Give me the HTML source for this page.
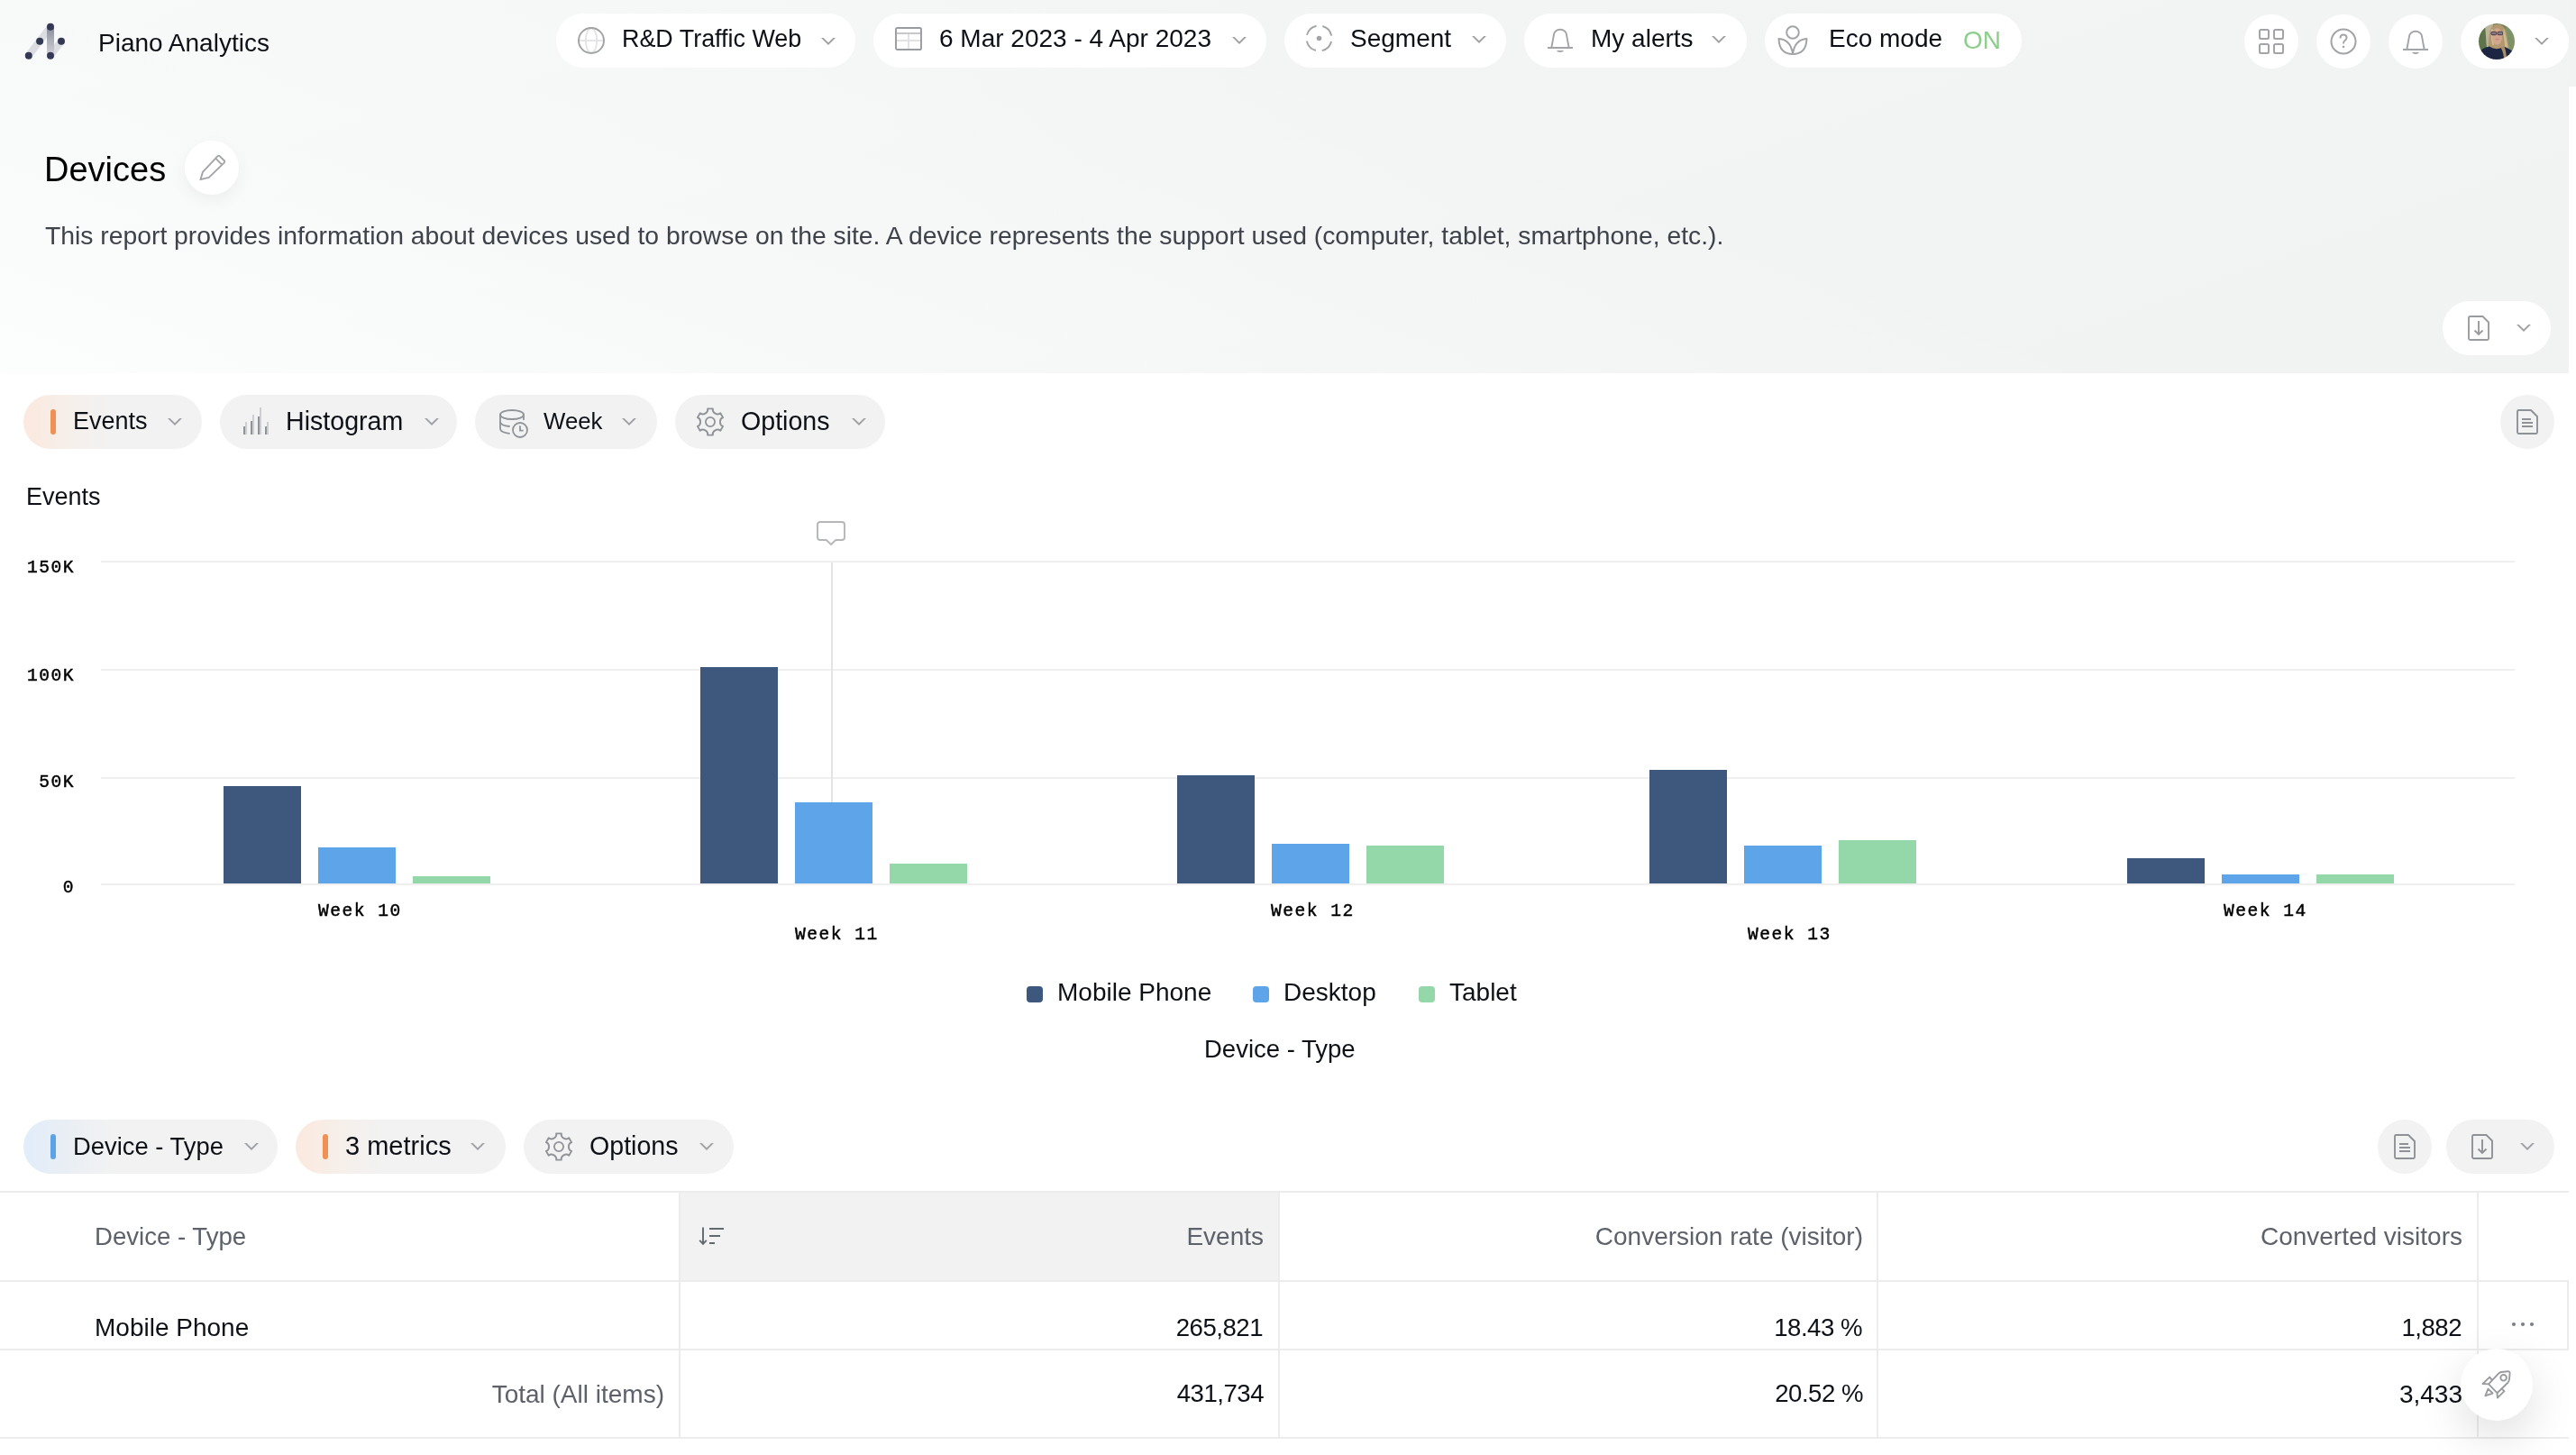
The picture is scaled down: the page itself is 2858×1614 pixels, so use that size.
<!DOCTYPE html>
<html><head><meta charset="utf-8">
<style>
html,body{margin:0;padding:0}
.t,.mono{will-change:transform}
body{width:2858px;height:1614px;overflow:hidden;position:relative;background:#fff;font-family:"Liberation Sans",sans-serif;color:#0d1117}
.a{position:absolute}
.t{position:absolute;white-space:nowrap;line-height:28px;font-size:28px}
.pill{position:absolute;height:60px;border-radius:30px;background:#fff}
.gp{position:absolute;height:60px;border-radius:30px;background:#f2f2f2;top:438px}
.chev{position:absolute;width:16px;height:8px}
.mono{position:absolute;white-space:nowrap;font-family:"Liberation Mono",monospace;font-size:19.6px;line-height:22px;letter-spacing:1.5px;color:#000;-webkit-text-stroke:0.45px #000}
.bar{position:absolute;width:86px}
.c1{background:#3d587c}.c2{background:#5da4e8}.c3{background:#94d7a9}
.hl{position:absolute;height:2px;background:#efefef}
.vl{position:absolute;width:2px;background:#ececec}
.tb{position:absolute;height:2px;background:#ececec}
.r{text-align:right}
</style></head><body>
<!-- header bg -->
<div class="a" style="left:0;top:0;width:2850px;height:414px;background:linear-gradient(160deg,#f6f7f7 0%,#f3f4f4 40%,#f1f2f2 100%)"></div>
<div class="a" style="left:0;top:0;width:2850px;height:414px;background:linear-gradient(20deg,rgba(252,253,253,1) 0%,rgba(250,251,251,0.6) 25%,rgba(241,242,242,0) 60%)"></div>
<div class="a" style="left:2850px;top:0;width:8px;height:96px;background:#f1f2f2"></div>

<!-- logo -->
<svg class="a" style="left:0;top:0" width="90" height="90" viewBox="0 0 90 90">
 <defs><linearGradient id="lg1" x1="0" y1="0" x2="0" y2="1"><stop offset="0" stop-color="#8a8d9c"/><stop offset="1" stop-color="#d4d5da"/></linearGradient></defs>
 <line x1="31.8" y1="61.7" x2="56" y2="29.8" stroke="#dcdde1" stroke-width="8"/>
 <line x1="56" y1="61.7" x2="68" y2="45.7" stroke="#dcdde1" stroke-width="8"/>
 <rect x="52" y="30" width="8" height="32" fill="url(#lg1)"/>
 <g fill="#343a55"><circle cx="31.8" cy="61.7" r="4"/><circle cx="44.1" cy="45.7" r="4"/><circle cx="56" cy="29.8" r="4"/><circle cx="68" cy="45.7" r="4"/><circle cx="56" cy="61.7" r="4"/></g>
</svg>
<div class="t" style="left:109.2px;top:34px;font-size:28px">Piano Analytics</div>

<!-- pill 1 -->
<div class="pill" style="left:617px;top:15px;width:332px"></div>
<svg class="a" style="left:640px;top:29px" width="32" height="32" viewBox="0 0 32 32">
 <line x1="3" y1="16" x2="29" y2="16" stroke="#e3e4e6" stroke-width="1.9"/>
 <ellipse cx="16" cy="16" rx="6.2" ry="13.6" fill="none" stroke="#e3e4e6" stroke-width="1.9"/>
 <circle cx="16" cy="16" r="14" fill="none" stroke="#a0a2a6" stroke-width="1.9"/>
</svg>
<div class="t" style="left:690px;top:29px;font-size:26.9px">R&amp;D Traffic Web</div>
<svg class="chev" style="left:911px;top:42px" viewBox="0 0 16 8"><path d="M0 0 L2.7 0 L8 5.3 L13.3 0 L16 0 L8 8 Z" fill="#9fa1a5"/></svg>

<!-- pill 2 -->
<div class="pill" style="left:969px;top:15px;width:436px"></div>
<svg class="a" style="left:993px;top:30px" width="30" height="26" viewBox="0 0 30 26">
 <line x1="2" y1="7" x2="28" y2="7" stroke="#c5c6c9" stroke-width="1.9"/>
 <rect x="1" y="1" width="28" height="24" rx="1.6" fill="none" stroke="#999b9f" stroke-width="1.9"/>
 <line x1="2" y1="15" x2="28" y2="15" stroke="#e0e1e3" stroke-width="1.9"/>
 <line x1="15" y1="8" x2="15" y2="24" stroke="#e0e1e3" stroke-width="1.9"/>
</svg>
<div class="t" style="left:1042px;top:29px">6 Mar 2023 - 4 Apr 2023</div>
<svg class="chev" style="left:1367px;top:41px" viewBox="0 0 16 8"><path d="M0 0 L2.7 0 L8 5.3 L13.3 0 L16 0 L8 8 Z" fill="#9fa1a5"/></svg>

<!-- pill 3 -->
<div class="pill" style="left:1425px;top:15px;width:246px"></div>
<svg class="a" style="left:1447px;top:26.4px" width="33" height="33" viewBox="0 0 33 33">
 <circle cx="16.5" cy="16.5" r="14" fill="none" stroke="#a2a4a8" stroke-width="2" stroke-dasharray="15 6.99" stroke-dashoffset="-3.5"/>
 <circle cx="16.5" cy="16.5" r="2.8" fill="#a2a4a8"/>
</svg>
<div class="t" style="left:1498px;top:29px">Segment</div>
<svg class="chev" style="left:1633px;top:40px" viewBox="0 0 16 8"><path d="M0 0 L2.7 0 L8 5.3 L13.3 0 L16 0 L8 8 Z" fill="#9fa1a5"/></svg>

<!-- pill 4 -->
<div class="pill" style="left:1691px;top:15px;width:247px"></div>
<svg class="a" style="left:1716px;top:31px" width="30" height="28" viewBox="0 0 30 28">
 <path d="M5.3 22 L8 7.5 A7 5.8 0 0 1 22 7.5 L24.7 22" fill="none" stroke="#a2a4a8" stroke-width="1.9"/>
 <line x1="1" y1="22" x2="29" y2="22" stroke="#a2a4a8" stroke-width="2"/>
 <path d="M11 24.9 L19 24.9 Q18.3 26.9 15 26.9 Q11.7 26.9 11 24.9 Z" fill="#a2a4a8"/>
</svg>
<div class="t" style="left:1765px;top:29px">My alerts</div>
<svg class="chev" style="left:1899px;top:40px" viewBox="0 0 16 8"><path d="M0 0 L2.7 0 L8 5.3 L13.3 0 L16 0 L8 8 Z" fill="#9fa1a5"/></svg>

<!-- pill 5 -->
<div class="pill" style="left:1958px;top:15px;width:285px"></div>
<svg class="a" style="left:1972px;top:28px" width="34" height="34" viewBox="0 0 34 34">
 <circle cx="17" cy="8" r="6.8" fill="none" stroke="#a2a4a8" stroke-width="2"/>
 <path d="M17 32 Q2 32 1.5 15 Q15 16 17 32 Q19 16 32.5 15 Q32 32 17 32 Z" fill="none" stroke="#a2a4a8" stroke-width="2" stroke-linejoin="round"/>
</svg>
<div class="t" style="left:2029px;top:29px">Eco mode</div>
<div class="t" style="left:2177.5px;top:31px;color:#8ccf8c;font-size:28px">ON</div>

<!-- right circles -->
<div class="pill" style="left:2490px;top:16px;width:60px"></div>
<svg class="a" style="left:2505px;top:31px" width="30" height="30" viewBox="0 0 30 30">
 <g fill="none" stroke="#a2a4a8" stroke-width="2"><rect x="2" y="2" width="10" height="10" rx="1.5"/><rect x="18" y="2" width="10" height="10" rx="1.5"/><rect x="2" y="18" width="10" height="10" rx="1.5"/><rect x="18" y="18" width="10" height="10" rx="1.5"/></g>
</svg>
<div class="pill" style="left:2570px;top:16px;width:60px"></div>
<svg class="a" style="left:2585px;top:31px" width="30" height="30" viewBox="0 0 30 30">
 <circle cx="15" cy="15" r="13.5" fill="none" stroke="#a2a4a8" stroke-width="2"/>
 <path d="M11.5 11.5 Q11.5 7.5 15 7.5 Q18.5 7.5 18.5 11 Q18.5 13 16.5 14 Q15 15 15 17.5" fill="none" stroke="#a2a4a8" stroke-width="2"/>
 <circle cx="15" cy="21" r="1.3" fill="#a2a4a8"/>
</svg>
<div class="pill" style="left:2650px;top:16px;width:60px"></div>
<svg class="a" style="left:2665px;top:33px" width="30" height="28" viewBox="0 0 30 28">
 <path d="M5.3 22 L8 7.5 A7 5.8 0 0 1 22 7.5 L24.7 22" fill="none" stroke="#a2a4a8" stroke-width="1.9"/>
 <line x1="1" y1="22" x2="29" y2="22" stroke="#a2a4a8" stroke-width="2"/>
 <path d="M11 24.9 L19 24.9 Q18.3 26.9 15 26.9 Q11.7 26.9 11 24.9 Z" fill="#a2a4a8"/>
</svg>
<div class="pill" style="left:2730px;top:16px;width:120px"></div>
<svg class="a" style="left:2750px;top:26px" width="40" height="40" viewBox="0 0 40 40">
 <defs><clipPath id="av"><circle cx="20" cy="20" r="20"/></clipPath><filter id="bl" x="-10%" y="-10%" width="120%" height="120%"><feGaussianBlur stdDeviation="0.6"/></filter></defs>
 <g clip-path="url(#av)"><g filter="url(#bl)">
  <rect width="40" height="40" fill="#6f8456"/>
  <rect x="0" y="0" width="12" height="40" fill="#5d7448"/>
  <rect x="30" y="0" width="10" height="40" fill="#7d9366"/>
  <path d="M7 0 L16 0 L15 26 L9 30 Z" fill="#bdb59b"/>
  <path d="M11 40 Q10 18 12.5 8 Q15 0.5 21 1 Q28 1 30.5 9 Q33 20 35 38 L30 40 Z" fill="#b29770"/>
  <path d="M28 6 Q31 14 33 32 L30 36 Q29 20 27 10 Z" fill="#cdbb92"/>
  <path d="M14 6 Q13 14 15.5 24 L17 24 Q15.5 14 16 7 Z" fill="#d2bf98"/>
  <ellipse cx="20.5" cy="14.5" rx="5.6" ry="9.6" fill="#d2a68c"/>
  <g fill="#8a7a86" stroke="#3f3748" stroke-width="1"><rect x="14" y="9.3" width="5.6" height="3.4" rx="1"/><rect x="21" y="9.3" width="5.6" height="3.4" rx="1"/></g>
  <ellipse cx="20.5" cy="17.6" rx="2.2" ry="0.9" fill="#c98580"/>
  <path d="M0 40 L0 33 Q3 27 12 25.5 Q16 28 20 28.2 Q26 27.5 29 26 Q37 29 40 34 L40 40 Z" fill="#1e2843"/>
  <path d="M24 26 Q27 30 28 38 L31 38 Q30 28 28 25 Z" fill="#a88f68"/>
 </g></g>
</svg>
<svg class="chev" style="left:2812px;top:42px" viewBox="0 0 16 8"><path d="M0 0 L2.7 0 L8 5.3 L13.3 0 L16 0 L8 8 Z" fill="#9fa1a5"/></svg>

<!-- report title -->
<div class="t" style="left:49px;top:169px;font-size:38px;line-height:38px;color:#000">Devices</div>
<div class="pill" style="left:205px;top:156px;width:60px;box-shadow:0 6px 18px rgba(0,0,0,0.05)"></div>
<svg class="a" style="left:215px;top:165px" width="40" height="40" viewBox="0 0 40 40"><path d="M7.4 34.2 L9.9 25.9 L26.3 8.3 Q27.6 7 28.9 8.3 L33.6 13 Q34.9 14.3 33.6 15.6 L16.8 31.9 Z M24.2 10.6 L31.4 17.8" fill="none" stroke="#a2a4a8" stroke-width="1.9" stroke-linejoin="round"/></svg>
<div class="t" style="left:49.8px;top:247px;font-size:28.3px;color:#3e434b">This report provides information about devices used to browse on the site. A device represents the support used (computer, tablet, smartphone, etc.).</div>

<!-- export pill header -->
<div class="pill" style="left:2710px;top:334px;width:120px"></div>
<svg class="a" style="left:2737px;top:350px" width="26" height="30" viewBox="0 0 26 30"><path d="M2 2.5 Q2 1 3.5 1 L17.5 1 L24 7.5 L24 25.5 Q24 27 22.5 27 L3.5 27 Q2 27 2 25.5 Z" fill="none" stroke="#999b9f" stroke-width="1.9" stroke-linejoin="round"/><path d="M13 6 L13 21 M8.5 16.5 L13 21 L17.5 16.5" fill="none" stroke="#999b9f" stroke-width="1.9"/></svg>
<svg class="chev" style="left:2792px;top:360px" viewBox="0 0 16 8"><path d="M0 0 L2.7 0 L8 5.3 L13.3 0 L16 0 L8 8 Z" fill="#9fa1a5"/></svg>

<!-- toolbar 1 -->
<div class="gp" style="left:26px;width:198px;background:linear-gradient(90deg,#fbe9de 0px,#f7eee8 40px,#f2f2f2 95px)"></div>
<div class="a" style="left:56px;top:454px;width:6px;height:28px;border-radius:3px;background:#ef9155"></div>
<div class="t" style="left:81px;top:453px;font-size:27px">Events</div>
<svg class="chev" style="left:186px;top:464px" viewBox="0 0 16 8"><path d="M0 0 L2.7 0 L8 5.3 L13.3 0 L16 0 L8 8 Z" fill="#9fa1a5"/></svg>
<div class="gp" style="left:244px;width:263px"></div>
<svg class="a" style="left:262px;top:446px" width="44" height="42" viewBox="0 0 44 42"><g fill="#909397"><rect x="8" y="27" width="2" height="9"/><rect x="16" y="21" width="2" height="15"/><rect x="24" y="16" width="2" height="20"/><rect x="32" y="27" width="2" height="9"/></g><g fill="#cdced1"><rect x="10" y="22" width="2" height="14"/><rect x="18" y="14" width="2" height="22"/><rect x="26" y="6" width="2" height="30"/><rect x="34" y="22" width="2" height="14"/></g></svg>
<div class="t" style="left:317px;top:453px;font-size:28.6px">Histogram</div>
<svg class="chev" style="left:471px;top:464px" viewBox="0 0 16 8"><path d="M0 0 L2.7 0 L8 5.3 L13.3 0 L16 0 L8 8 Z" fill="#9fa1a5"/></svg>
<div class="gp" style="left:527px;width:202px"></div>
<svg class="a" style="left:546px;top:446px" width="48" height="46" viewBox="0 0 48 46"><g fill="none" stroke="#909397" stroke-width="1.8" stroke-linecap="round"><ellipse cx="22" cy="14" rx="13" ry="5"/><path d="M9 14 L9 29.5 Q9 33.5 19 34.8"/><path d="M9 22.5 Q10 26 19 27"/><path d="M35 14 L35 19.3"/><circle cx="31" cy="31" r="8"/><path d="M31 26.3 L31 31.6 L34.6 31.6" stroke-linecap="butt"/></g></svg>
<div class="t" style="left:603px;top:453px;font-size:25.8px">Week</div>
<svg class="chev" style="left:690px;top:464px" viewBox="0 0 16 8"><path d="M0 0 L2.7 0 L8 5.3 L13.3 0 L16 0 L8 8 Z" fill="#9fa1a5"/></svg>
<div class="gp" style="left:749px;width:233px"></div>
<svg class="a" style="left:764px;top:444px" width="48" height="48" viewBox="0 0 48 48"><path d="M21.16 9.37 L26.84 9.37 C25.98 13.79 31.85 17.18 35.25 14.22 L38.09 19.15 C33.83 20.61 33.83 27.39 38.09 28.85 L35.25 33.78 C31.85 30.82 25.98 34.21 26.84 38.63 L21.16 38.63 C22.02 34.21 16.15 30.82 12.75 33.78 L9.91 28.85 C14.17 27.39 14.17 20.61 9.91 19.15 L12.75 14.22 C16.15 17.18 22.02 13.79 21.16 9.37 Z" fill="none" stroke="#909397" stroke-width="1.9" stroke-linejoin="round"/><circle cx="24" cy="24" r="5.1" fill="none" stroke="#909397" stroke-width="1.8"/></svg>
<div class="t" style="left:822px;top:453px;font-size:28.6px">Options</div>
<svg class="chev" style="left:945px;top:464px" viewBox="0 0 16 8"><path d="M0 0 L2.7 0 L8 5.3 L13.3 0 L16 0 L8 8 Z" fill="#9fa1a5"/></svg>
<div class="gp" style="left:2774px;width:60px"></div>
<svg class="a" style="left:2791px;top:453px" width="26" height="30" viewBox="0 0 26 30"><path d="M2 3.5 Q2 2 3.5 2 L17 2 L24 9 L24 26.5 Q24 28 22.5 28 L3.5 28 Q2 28 2 26.5 Z" fill="none" stroke="#8e9196" stroke-width="1.9" stroke-linejoin="round"/><path d="M7 12 L17 12 M7 16 L19 16 M7 20 L19 20" stroke="#8e9196" stroke-width="1.9"/></svg>

<!-- chart -->
<div class="t" style="left:29px;top:537px;font-size:27px">Events</div>
<svg class="a" style="left:905px;top:577px" width="34" height="30" viewBox="0 0 34 30"><path d="M5 2 L29 2 Q32 2 32 5 L32 19 Q32 22 29 22 L22.3 22 L17 27 L11.7 22 L5 22 Q2 22 2 19 L2 5 Q2 2 5 2 Z" fill="none" stroke="#b4b6b9" stroke-width="1.9" stroke-linejoin="miter"/></svg>
<div class="hl" style="left:112px;top:622px;width:2678px"></div>
<div class="hl" style="left:112px;top:742px;width:2678px"></div>
<div class="hl" style="left:112px;top:862px;width:2678px"></div>
<div class="hl" style="left:112px;top:980px;width:2678px"></div>
<div class="mono r" style="left:0;width:83px;top:619px">150K</div>
<div class="mono r" style="left:0;width:83px;top:739px">100K</div>
<div class="mono r" style="left:0;width:83px;top:856.5px">50K</div>
<div class="mono r" style="left:0;width:83px;top:974px">0</div>
<div class="a" style="left:922px;top:624px;width:2px;height:267px;background:#e3e4e6"></div>
<div class="bar c1" style="left:248px;top:872px;height:108px"></div>
<div class="bar c2" style="left:353px;top:940px;height:40px"></div>
<div class="bar c3" style="left:458px;top:972px;height:8px"></div>
<div class="bar c1" style="left:777px;top:740px;height:240px"></div>
<div class="bar c2" style="left:882px;top:890px;height:90px"></div>
<div class="bar c3" style="left:987px;top:958px;height:22px"></div>
<div class="bar c1" style="left:1306px;top:860px;height:120px"></div>
<div class="bar c2" style="left:1411px;top:936px;height:44px"></div>
<div class="bar c3" style="left:1516px;top:938px;height:42px"></div>
<div class="bar c1" style="left:1830px;top:854px;height:126px"></div>
<div class="bar c2" style="left:1935px;top:938px;height:42px"></div>
<div class="bar c3" style="left:2040px;top:932px;height:48px"></div>
<div class="bar c1" style="left:2360px;top:952px;height:28px"></div>
<div class="bar c2" style="left:2465px;top:970px;height:10px"></div>
<div class="bar c3" style="left:2570px;top:970px;height:10px"></div>
<div class="mono" style="left:353px;top:1000px">Week 10</div>
<div class="mono" style="left:882px;top:1026px">Week 11</div>
<div class="mono" style="left:1410px;top:1000px">Week 12</div>
<div class="mono" style="left:1939px;top:1026px">Week 13</div>
<div class="mono" style="left:2467px;top:1000px">Week 14</div>

<!-- legend -->
<div class="a c1" style="left:1139px;top:1094px;width:18px;height:18px;border-radius:4px"></div>
<div class="t" style="left:1173px;top:1087px">Mobile Phone</div>
<div class="a c2" style="left:1390px;top:1094px;width:18px;height:18px;border-radius:4px"></div>
<div class="t" style="left:1424px;top:1087px">Desktop</div>
<div class="a c3" style="left:1574px;top:1094px;width:18px;height:18px;border-radius:4px"></div>
<div class="t" style="left:1608px;top:1087px">Tablet</div>
<div class="t" style="left:1336px;top:1150px;font-size:27.5px">Device - Type</div>

<!-- toolbar 2 -->
<div class="gp" style="top:1242px;left:26px;width:282px;background:linear-gradient(90deg,#e1edfa 0px,#e8eef5 40px,#f2f2f2 100px)"></div>
<div class="a" style="left:56px;top:1258px;width:6px;height:28px;border-radius:3px;background:#5ca3e6"></div>
<div class="t" style="left:81px;top:1258px;font-size:27.4px">Device - Type</div>
<svg class="chev" style="left:271px;top:1268px" viewBox="0 0 16 8"><path d="M0 0 L2.7 0 L8 5.3 L13.3 0 L16 0 L8 8 Z" fill="#9fa1a5"/></svg>
<div class="gp" style="top:1242px;left:328px;width:233px;background:linear-gradient(90deg,#fbe9de 0px,#f7eee8 40px,#f2f2f2 95px)"></div>
<div class="a" style="left:358px;top:1258px;width:6px;height:28px;border-radius:3px;background:#ef9155"></div>
<div class="t" style="left:383px;top:1257px;font-size:29px">3 metrics</div>
<svg class="chev" style="left:522px;top:1268px" viewBox="0 0 16 8"><path d="M0 0 L2.7 0 L8 5.3 L13.3 0 L16 0 L8 8 Z" fill="#9fa1a5"/></svg>
<div class="gp" style="top:1242px;left:581px;width:233px"></div>
<svg class="a" style="left:596px;top:1248px" width="48" height="48" viewBox="0 0 48 48"><path d="M21.16 9.37 L26.84 9.37 C25.98 13.79 31.85 17.18 35.25 14.22 L38.09 19.15 C33.83 20.61 33.83 27.39 38.09 28.85 L35.25 33.78 C31.85 30.82 25.98 34.21 26.84 38.63 L21.16 38.63 C22.02 34.21 16.15 30.82 12.75 33.78 L9.91 28.85 C14.17 27.39 14.17 20.61 9.91 19.15 L12.75 14.22 C16.15 17.18 22.02 13.79 21.16 9.37 Z" fill="none" stroke="#909397" stroke-width="1.9" stroke-linejoin="round"/><circle cx="24" cy="24" r="5.1" fill="none" stroke="#909397" stroke-width="1.8"/></svg>
<div class="t" style="left:654px;top:1257px;font-size:28.6px">Options</div>
<svg class="chev" style="left:776px;top:1268px" viewBox="0 0 16 8"><path d="M0 0 L2.7 0 L8 5.3 L13.3 0 L16 0 L8 8 Z" fill="#9fa1a5"/></svg>
<div class="gp" style="top:1242px;left:2638px;width:60px"></div>
<svg class="a" style="left:2655px;top:1257px" width="26" height="30" viewBox="0 0 26 30"><path d="M2 3.5 Q2 2 3.5 2 L17 2 L24 9 L24 26.5 Q24 28 22.5 28 L3.5 28 Q2 28 2 26.5 Z" fill="none" stroke="#8e9196" stroke-width="1.9" stroke-linejoin="round"/><path d="M7 12 L17 12 M7 16 L19 16 M7 20 L19 20" stroke="#8e9196" stroke-width="1.9"/></svg>
<div class="gp" style="top:1242px;left:2714px;width:120px"></div>
<svg class="a" style="left:2741px;top:1257px" width="26" height="30" viewBox="0 0 26 30"><path d="M2 3.5 Q2 2 3.5 2 L17.5 2 L24 8.5 L24 26.5 Q24 28 22.5 28 L3.5 28 Q2 28 2 26.5 Z" fill="none" stroke="#8e9196" stroke-width="1.9" stroke-linejoin="round"/><path d="M13 7 L13 22 M8.5 17.5 L13 22 L17.5 17.5" fill="none" stroke="#8e9196" stroke-width="1.9"/></svg>
<svg class="chev" style="left:2796px;top:1268px" viewBox="0 0 16 8"><path d="M0 0 L2.7 0 L8 5.3 L13.3 0 L16 0 L8 8 Z" fill="#9fa1a5"/></svg>

<!-- table -->
<div class="a" style="left:754px;top:1322px;width:665px;height:99px;background:#f2f2f2"></div>
<div class="tb" style="left:0;top:1321px;width:2850px"></div>
<div class="tb" style="left:0;top:1420px;width:2850px"></div>
<div class="tb" style="left:0;top:1496px;width:2850px"></div>
<div class="tb" style="left:0;top:1594px;width:2850px"></div>
<div class="vl" style="left:753px;top:1322px;height:273px"></div>
<div class="vl" style="left:1418px;top:1322px;height:273px"></div>
<div class="vl" style="left:2082px;top:1322px;height:273px"></div>
<div class="vl" style="left:2748px;top:1322px;height:273px"></div>
<div class="vl" style="left:2848px;top:1421px;height:76px"></div>
<div class="t" style="left:105px;top:1358px;color:#5d6169;font-size:27.6px">Device - Type</div>
<svg class="a" style="left:774px;top:1360px" width="30" height="22" viewBox="0 0 30 22"><g fill="none" stroke="#63676e" stroke-width="1.9"><path d="M6 1.5 L6 20 M2.2 15.8 L6 19.8 L9.8 15.8"/><path d="M13 3 L29 3 M13 11 L25 11 M13 19 L19 19"/></g></svg>
<div class="t r" style="left:1001px;width:401px;top:1358px;color:#5d6169">Events</div>
<div class="t r" style="left:1668px;width:399px;top:1358px;color:#5d6169">Conversion rate (visitor)</div>
<div class="t r" style="left:2333px;width:399px;top:1358px;color:#5d6169">Converted visitors</div>
<div class="t" style="left:105px;top:1459px">Mobile Phone</div>
<div class="t r" style="left:1001px;width:400px;top:1459px;font-size:27.6px;letter-spacing:-0.5px">265,821</div>
<div class="t r" style="left:1668px;width:398px;top:1459px;font-size:27.6px;letter-spacing:-0.5px">18.43 %</div>
<div class="t r" style="left:2333px;width:398px;top:1459px;font-size:27.6px;letter-spacing:-0.5px">1,882</div>
<svg class="a" style="left:2784px;top:1464px" width="30" height="10" viewBox="0 0 30 10"><g fill="#7b7f86"><circle cx="5" cy="5" r="2.1"/><circle cx="15" cy="5" r="2.1"/><circle cx="25" cy="5" r="2.1"/></g></svg>
<div class="t r" style="left:338px;width:399px;top:1533px;color:#5d6169">Total (All items)</div>
<div class="t r" style="left:1001px;width:401px;top:1532px;font-size:27.6px;letter-spacing:-0.5px">431,734</div>
<div class="t r" style="left:1668px;width:399px;top:1532px;font-size:27.6px;letter-spacing:-0.5px">20.52 %</div>
<div class="t r" style="left:2333px;width:399px;top:1533px;font-size:28px">3,433</div>

<!-- rocket fab -->
<div class="a" style="left:2730px;top:1496px;width:80px;height:80px;border-radius:40px;background:#fff;box-shadow:0 18px 50px rgba(0,0,0,0.13)"></div>
<svg class="a" style="left:2745px;top:1510px" width="50" height="50" viewBox="0 0 50 50"><g fill="none" stroke="#999b9f" stroke-width="1.9" stroke-linejoin="round"><path d="M16 25.4 L27.3 13.4 Q28.5 12.3 30 12 L37.5 11.2 Q39.6 11.1 39.6 13.2 L39 20 Q38.7 22.4 37.2 24 L25.5 35.2 Z"/><circle cx="32.6" cy="18.3" r="3.3"/><path d="M20.1 21.1 L17.2 17.6 L9.5 25 L16 25.4"/><path d="M30.2 30.3 L33.5 33.1 L25.9 40.6 L25.5 35.2"/><path d="M15.5 30.6 L20.5 35.5 L12.4 38.4 Z"/></g></svg>
</body></html>
